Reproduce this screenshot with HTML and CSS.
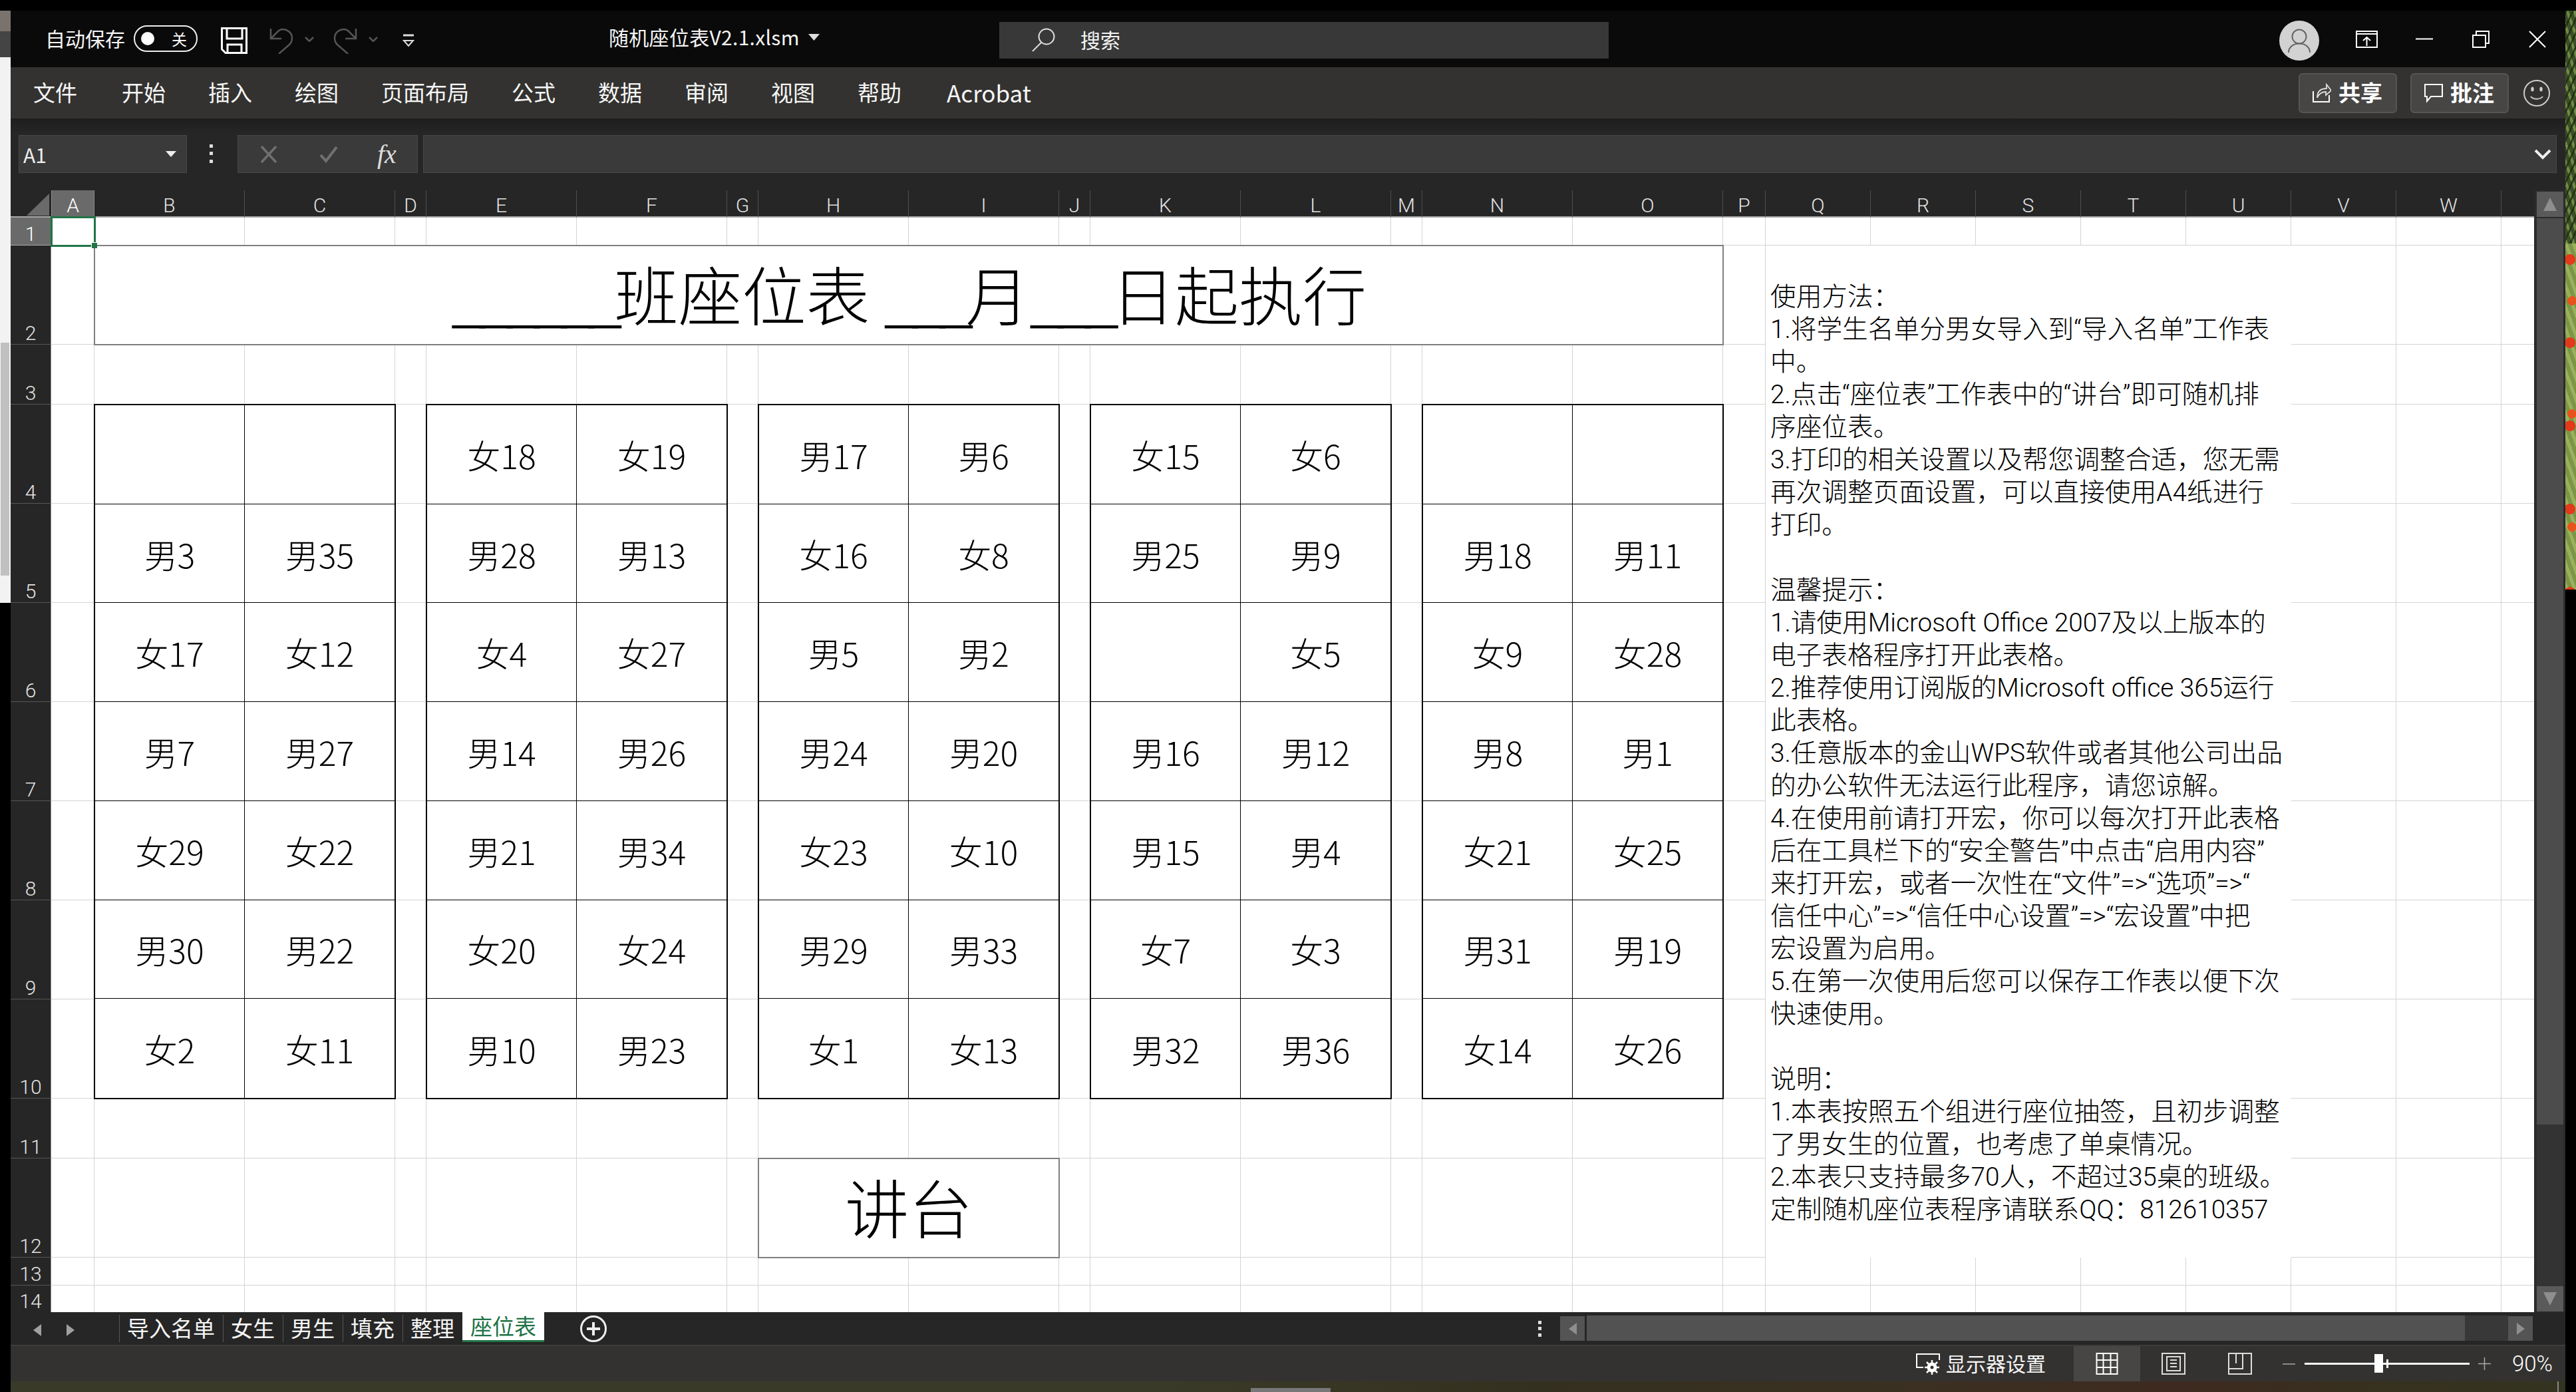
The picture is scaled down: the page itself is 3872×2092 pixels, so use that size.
FILE: index.html
```
<!DOCTYPE html>
<html lang="zh-CN">

<head>
    <meta http-equiv="Content-Type" content="text/html; charset=utf-8">
    <title>随机座位表V2.1.xlsm - Excel</title>
    <link rel="stylesheet" href="styles.css">
</head>

<body>
    <div class="topgap"></div>
    <div class="desktop">
        <div class="strip-left">
            <div class="sl-a"></div>
            <div class="sl-b"></div>
            <div class="sl-c"><div class="sl-thumb"></div></div>
        </div>

        <div class="window">
            <div class="titlebar">
                <span class="autosave">自动保存</span>
                <div class="toggle"><span class="knob"></span><span class="toggle-off">关</span></div>
                <svg class="ico-save" viewBox="0 0 40 40"><path d="M1.5 1.5H38.500V38.500H7L1.500 33ZM9 1.500V17H32V1.500M10 38.500V26H31V38.500" fill="none" stroke="#fff" stroke-width="3"/></svg>
                <svg class="ico-undo" viewBox="0 0 36 40"><path d="M2 2V17H18M2 17L14 5C22 0 34 6 34 16C34 22 32 24 30 26L14 40" fill="none" stroke="#555" stroke-width="2.500"/></svg>
                <svg class="ico-chev" viewBox="0 0 14 8"><path d="M1 1L7 7L13 1" fill="none" stroke="#555" stroke-width="2.500"/></svg>
                <svg class="ico-redo" viewBox="0 0 36 40"><path d="M34 2V17H18M34 17L22 5C14 0 2 6 2 16C2 22 4 24 6 26L22 40" fill="none" stroke="#555" stroke-width="2.500"/></svg>
                <svg class="ico-chev" viewBox="0 0 14 8"><path d="M1 1L7 7L13 1" fill="none" stroke="#555" stroke-width="2.500"/></svg>
                <svg class="ico-more" viewBox="0 0 18 20"><path d="M1 2H17" stroke="#ddd" stroke-width="3"/><path d="M2 10H16L9 18Z" fill="none" stroke="#ddd" stroke-width="2"/></svg>
                <span class="filename">随机座位表V2.1.xlsm</span>
                <svg class="ico-caret" viewBox="0 0 17 10"><path d="M0 0H17L8.500 10Z" fill="#ddd"/></svg>
                <div class="search">
                    <svg class="ico-search" viewBox="0 0 36 36"><circle cx="23" cy="13" r="11.500" fill="none" stroke="#ddd" stroke-width="2"/><path d="M15 22L2 35" stroke="#ddd" stroke-width="2"/></svg>
                    <span>搜索</span>
                </div>
                <svg class="avatar" viewBox="0 0 60 60"><circle cx="30" cy="30" r="30" fill="#d2d2d2"/><circle cx="30" cy="24" r="10.500" fill="none" stroke="#666" stroke-width="2"/><path d="M14 48C14 30 46 30 46 48" fill="none" stroke="#666" stroke-width="2"/></svg>
                <svg class="ico-display" viewBox="0 0 33 26"><path d="M1 1H32V25H1ZM1 5H32" fill="none" stroke="#fff" stroke-width="2"/><path d="M16.500 23V10M11 15L16.500 10L22 15" fill="none" stroke="#fff" stroke-width="2"/></svg>
                <svg class="ico-min" viewBox="0 0 26 3"><path d="M0 1.500H26" stroke="#fff" stroke-width="2"/></svg>
                <svg class="ico-restore" viewBox="0 0 26 26"><path d="M1 7H20V25H1ZM6 7V1H25V19H20" fill="none" stroke="#fff" stroke-width="2"/></svg>
                <svg class="ico-close" viewBox="0 0 26 26"><path d="M1 1L25 25M25 1L1 25" stroke="#fff" stroke-width="2"/></svg>
            </div>

            <div class="ribbon">
                <nav class="menu">
                    <span class="m-file">文件</span><span>开始</span><span>插入</span><span>绘图</span><span>页面布局</span><span>公式</span><span>数据</span><span>审阅</span><span>视图</span><span>帮助</span><span class="m-acrobat">Acrobat</span>
                </nav>
                <button class="rbtn">
                    <svg class="ico-share" viewBox="0 0 28 30"><path d="M1 12V28H25V18" fill="none" stroke="#fff" stroke-width="2"/><path d="M7 22C7 12 13 8 21 8V2L28 11L20 18V13C14 13 10 15 7 22Z" fill="none" stroke="#ddd" stroke-width="1.800"/></svg>
                    <b>共享</b>
                </button>
                <button class="rbtn">
                    <svg class="ico-share" viewBox="0 0 28 28"><path d="M1 1H27V19H10L4 26V19H1Z" fill="none" stroke="#fff" stroke-width="2"/></svg>
                    <b>批注</b>
                </button>
                <svg class="ico-smile" viewBox="0 0 40 40"><circle cx="20" cy="20" r="19" fill="none" stroke="#ccc" stroke-width="2"/><ellipse cx="13.500" cy="14" rx="2.200" ry="3.500" fill="#ccc"/><ellipse cx="26.500" cy="14" rx="2.200" ry="3.500" fill="#ccc"/><path d="M11 25C15 30 25 30 29 25" fill="none" stroke="#ccc" stroke-width="2"/></svg>
            </div>

            <div class="formula">
                <div class="namebox">
                    <span>A1</span>
                    <svg class="ico-namecaret" viewBox="0 0 16 9"><path d="M0 0H16L8 9Z" fill="#eee"/></svg>
                </div>
                <svg class="ico-kebab" viewBox="0 0 5 28"><path d="M0 0H5V5H0ZM0 11H5V16H0ZM0 23H5V28H0Z" fill="#ddd"/></svg>
                <div class="fxbox">
                    <svg class="ico-x" viewBox="0 0 30 26"><path d="M4 1L26 25M26 1L4 25" stroke="#707070" stroke-width="3.500"/></svg>
                    <svg class="ico-check" viewBox="0 0 30 26"><path d="M3 14L11 23L27 2" fill="none" stroke="#707070" stroke-width="4"/></svg>
                    <i class="fx">fx</i>
                </div>
                <div class="fbar">
                    <svg class="ico-fchev" viewBox="0 0 26 16"><path d="M2 2L13 13L24 2" fill="none" stroke="#eee" stroke-width="4"/></svg>
                </div>
            </div>

            <div class="workarea">
                <div class="book">
                    <div class="colhead">
                        <div class="corner"><span class="corner-tri"></span></div>
                        <div class="ch active">A</div><div class="ch">B</div><div class="ch">C</div><div class="ch">D</div><div class="ch">E</div><div class="ch">F</div><div class="ch">G</div><div class="ch">H</div><div class="ch">I</div><div class="ch">J</div><div class="ch">K</div><div class="ch">L</div><div class="ch">M</div><div class="ch">N</div><div class="ch">O</div><div class="ch">P</div><div class="ch">Q</div><div class="ch">R</div><div class="ch">S</div><div class="ch">T</div><div class="ch">U</div><div class="ch">V</div><div class="ch">W</div><div class="ch"></div>
                    </div>
                    <div class="sheetrow">
                        <div class="rowhead">
                            <div class="rh active">1</div><div class="rh">2</div><div class="rh">3</div><div class="rh">4</div><div class="rh">5</div><div class="rh">6</div><div class="rh">7</div><div class="rh">8</div><div class="rh">9</div><div class="rh">10</div><div class="rh">11</div><div class="rh">12</div><div class="rh">13</div><div class="rh">14</div>
                        </div>
                        <div class="sheet">
                            <div class="vlines">
                                <i></i><i></i><i></i><i></i><i></i><i></i><i></i><i></i><i></i><i></i><i></i><i></i><i></i><i></i><i></i><i></i><i></i><i></i><i></i><i></i><i></i><i></i><i></i><i></i>
                            </div>
                            <div class="hlines">
                                <i></i><i></i><i></i><i></i><i></i><i></i><i></i><i></i><i></i><i></i><i></i><i></i><i></i><i></i>
                            </div>

                            <div class="selcell"><span class="handle"></span></div>
                            <div class="titlecell"><span><span class="us">______</span>班座位表 <span class="us">___</span>月<span class="us">___</span>日起执行</span></div>

                            <div class="group g1">
                                <div></div><div></div>
                                <div>男3</div><div>男35</div>
                                <div>女17</div><div>女12</div>
                                <div>男7</div><div>男27</div>
                                <div>女29</div><div>女22</div>
                                <div>男30</div><div>男22</div>
                                <div>女2</div><div>女11</div>
                            </div>
                            <div class="group g2">
                                <div>女18</div><div>女19</div>
                                <div>男28</div><div>男13</div>
                                <div>女4</div><div>女27</div>
                                <div>男14</div><div>男26</div>
                                <div>男21</div><div>男34</div>
                                <div>女20</div><div>女24</div>
                                <div>男10</div><div>男23</div>
                            </div>
                            <div class="group g3">
                                <div>男17</div><div>男6</div>
                                <div>女16</div><div>女8</div>
                                <div>男5</div><div>男2</div>
                                <div>男24</div><div>男20</div>
                                <div>女23</div><div>女10</div>
                                <div>男29</div><div>男33</div>
                                <div>女1</div><div>女13</div>
                            </div>
                            <div class="group g4">
                                <div>女15</div><div>女6</div>
                                <div>男25</div><div>男9</div>
                                <div></div><div>女5</div>
                                <div>男16</div><div>男12</div>
                                <div>男15</div><div>男4</div>
                                <div>女7</div><div>女3</div>
                                <div>男32</div><div>男36</div>
                            </div>
                            <div class="group g5">
                                <div></div><div></div>
                                <div>男18</div><div>男11</div>
                                <div>女9</div><div>女28</div>
                                <div>男8</div><div>男1</div>
                                <div>女21</div><div>女25</div>
                                <div>男31</div><div>男19</div>
                                <div>女14</div><div>女26</div>
                            </div>

                            <div class="podium">讲台</div>

                            <div class="notes">
                                <p>使用方法：</p>
                                <p>1.将学生名单分男女导入到“导入名单”工作表</p>
                                <p>中。</p>
                                <p>2.点击“座位表”工作表中的“讲台”即可随机排</p>
                                <p>序座位表。</p>
                                <p>3.打印的相关设置以及帮您调整合适，您无需</p>
                                <p>再次调整页面设置，可以直接使用A4纸进行</p>
                                <p>打印。</p>
                                <p>&nbsp;</p>
                                <p>温馨提示：</p>
                                <p>1.请使用Microsoft Office 2007及以上版本的</p>
                                <p>电子表格程序打开此表格。</p>
                                <p>2.推荐使用订阅版的Microsoft office 365运行</p>
                                <p>此表格。</p>
                                <p>3.任意版本的金山WPS软件或者其他公司出品</p>
                                <p>的办公软件无法运行此程序，请您谅解。</p>
                                <p>4.在使用前请打开宏，你可以每次打开此表格</p>
                                <p>后在工具栏下的“安全警告”中点击“启用内容”</p>
                                <p>来打开宏，或者一次性在“文件”=&gt;“选项”=&gt;“</p>
                                <p>信任中心”=&gt;“信任中心设置”=&gt;“宏设置”中把</p>
                                <p>宏设置为启用。</p>
                                <p>5.在第一次使用后您可以保存工作表以便下次</p>
                                <p>快速使用。</p>
                                <p>&nbsp;</p>
                                <p>说明：</p>
                                <p>1.本表按照五个组进行座位抽签，且初步调整</p>
                                <p>了男女生的位置，也考虑了单桌情况。</p>
                                <p>2.本表只支持最多70人，不超过35桌的班级。</p>
                                <p>定制随机座位表程序请联系QQ：812610357</p>
                            </div>
                        </div>
                    </div>
                </div>
                <div class="vscroll">
                    <div class="vbtn"><svg class="ico-vup" viewBox="0 0 20 20"><path d="M10 0L20 20H0Z" fill="#8e8e8e"/></svg></div>
                    <div class="vthumb"></div>
                    <div class="vtrack"></div>
                    <div class="vbtn"><svg class="ico-vup" viewBox="0 0 20 20"><path d="M10 20L20 0H0Z" fill="#8e8e8e"/></svg></div>
                </div>
            </div>

            <div class="tabbar">
                <div class="tabnav">
                    <svg class="ico-tabnav" viewBox="0 0 12 18"><path d="M12 0V18L0 9Z" fill="#a0a0a0"/></svg>
                    <svg class="ico-tabnav" viewBox="0 0 12 18"><path d="M0 0V18L12 9Z" fill="#a0a0a0"/></svg>
                </div>
                <div class="tab">导入名单</div>
                <div class="tab">女生</div>
                <div class="tab">男生</div>
                <div class="tab">填充</div>
                <div class="tab">整理</div>
                <div class="tab current">座位表</div>
                <svg class="ico-plus" viewBox="0 0 40 40"><circle cx="20" cy="20" r="18.500" fill="none" stroke="#eee" stroke-width="3"/><path d="M20 10V30M10 20H30" stroke="#eee" stroke-width="4"/></svg>
                <svg class="ico-tabkebab" viewBox="0 0 5 24"><path d="M0 0H5V5H0ZM0 9H5V14H0ZM0 19H5V24H0Z" fill="#ddd"/></svg>
                <div class="hbtn hbtn-left"><svg class="ico-hb" viewBox="0 0 12 18"><path d="M12 0V18L0 9Z" fill="#8e8e8e"/></svg></div>
                <div class="hthumb"></div>
                <div class="hbtn"><svg class="ico-hb" viewBox="0 0 12 18"><path d="M0 0V18L12 9Z" fill="#8e8e8e"/></svg></div>
            </div>

            <div class="statusbar">
                <svg class="ico-disp" viewBox="0 0 37 32"><path d="M11 21H1V1H35V10" fill="none" stroke="#fff" stroke-width="2"/><circle cx="24" cy="21" r="5" fill="none" stroke="#fff" stroke-width="5"/><path d="M24 10V14M24 28V32M13 21H17M31 21H35M16 13L19 16M29 26L32 29M32 13L29 16M19 26L16 29" stroke="#fff" stroke-width="2.500"/></svg>
                <span class="disp-text">显示器设置</span>
                <div class="viewbtn on">
                    <svg class="ico-view" viewBox="0 0 33 33"><path d="M1 1H32V32H1ZM11 1V32M22 1V32M1 11H32M1 22H32" fill="none" stroke="#fff" stroke-width="2"/></svg>
                </div>
                <div class="viewbtn">
                    <svg class="ico-view" viewBox="0 0 36 33"><path d="M1 1H35V32H1ZM8 6H28V27H8ZM13 11H23M13 16H23M13 21H23" fill="none" stroke="#ddd" stroke-width="2"/></svg>
                </div>
                <div class="viewbtn">
                    <svg class="ico-view" viewBox="0 0 36 33"><path d="M1 1H35V32H1ZM1 24H22V1M12 1V16" fill="none" stroke="#ddd" stroke-width="2"/></svg>
                </div>
                <span class="zoom-minus"></span>
                <div class="slider"><span class="slider-thumb"></span><span class="slider-tick"></span></div>
                <svg class="zoom-plus" viewBox="0 0 19 19"><path d="M9.500 0V19M0 9.500H19" stroke="#aaa" stroke-width="1.500"/></svg>
                <span class="zoom-val">90%</span>
            </div>

            <div class="wallbottom"><span class="wb-task"></span><span class="wb-bar"></span></div>
        </div>

        <div class="strip-right">
            <div class="sr-a"></div>
            <div class="sr-b"></div>
        </div>
    </div>
</body>
</html>
```
FILE: styles.css
```
* {
    box-sizing: border-box;
}

html,
body {
    margin: 0;
    width: 3872px;
    height: 2092px;
    overflow: hidden;
    background: #000;
    font-family: "Noto Sans CJK SC", sans-serif;
    color: #eee;
}

svg {
    display: block;
    flex: none;
}

.topgap {
    height: 16px;
}

.desktop {
    display: flex;
    height: 2076px;
}

/* whatever sits behind the window */
.strip-left {
    width: 16px;
    background: #000;
}

.sl-a {
    height: 31px;
    background: #7a736d;
}

.sl-b {
    height: 39px;
    background: #444;
}

.sl-c {
    height: 820px;
    background: #f2f2f2;
    padding: 429px 2px 0 1px;
}

.sl-thumb {
    height: 350px;
    background: #c0c0c0;
}

.strip-right {
    width: 16px;
}

.sr-a {
    height: 350px;
    background:
        repeating-linear-gradient(115deg, rgba(20, 40, 10, .7) 0 3px, transparent 3px 9px),
        repeating-linear-gradient(70deg, #6e8a45 0 4px, #3d4f28 4px 10px);
}

.sr-b {
    height: 520px;
    background:
        radial-gradient(circle 8px at 7px 24px, #e23a1a 98%, transparent),
        radial-gradient(circle 7px at 10px 86px, #e8531c 98%, transparent),
        repeating-linear-gradient(70deg, #9ab05c 0 5px, #7c9648 5px 11px);
    background-size: 16px 125px, 16px 170px, auto;
}

.window {
    width: 3840px;
    display: flex;
    flex-direction: column;
}

/* title bar */
.titlebar {
    height: 85px;
    background: #0a0a0a;
    display: flex;
    align-items: center;
    padding: 0 0 4px 52px;
    font-size: 30px;
    color: #f4f4f4;
}

.autosave {
    width: 120px;
}

.toggle {
    width: 96px;
    height: 40px;
    margin-left: 13px;
    border: 2px solid #eee;
    border-radius: 20px;
    display: flex;
    align-items: center;
    padding-left: 9px;
    margin-top: 3px;
}

.knob {
    width: 20px;
    height: 20px;
    background: #fff;
    border-radius: 50%;
}

.toggle-off {
    font-size: 23px;
    margin-left: 26px;
    color: #fff;
}

.ico-save {
    width: 40px;
    height: 40px;
    margin-left: 35px;
    margin-top: 8px;
}

.ico-undo,
.ico-redo {
    width: 36px;
    height: 40px;
    margin-top: 8px;
}

.ico-undo {
    margin-left: 33px;
}

.ico-redo {
    margin-left: 29px;
}

.ico-chev {
    width: 14px;
    height: 8px;
    margin-left: 17px;
    margin-top: 4px;
}

.ico-more {
    width: 18px;
    height: 20px;
    margin-left: 37px;
    margin-top: 8px;
}

.filename {
    margin-left: 292px;
    width: 285px;
    margin-top: -4px;
    letter-spacing: .3px;
    white-space: nowrap;
}

.ico-caret {
    width: 17px;
    height: 10px;
    margin-left: 15px;
    margin-top: -2px;
}

.search {
    width: 916px;
    height: 55px;
    margin-left: 270px;
    background: #383838;
    display: flex;
    align-items: center;
    padding-left: 48px;
    margin-top: 7px;
}

.search span {
    margin-left: 38px;
    margin-top: -2px;
}

.ico-search {
    width: 36px;
    height: 36px;
}

.avatar {
    width: 60px;
    height: 60px;
    margin-left: 1008px;
    margin-top: 8px;
}

.ico-display {
    width: 33px;
    height: 26px;
    margin-left: 55px;
    margin-top: 4px;
}

.ico-min {
    width: 26px;
    height: 3px;
    margin-left: 57px;
    margin-top: 4px;
}

.ico-restore {
    width: 26px;
    height: 26px;
    margin-left: 59px;
    margin-top: 4px;
}

.ico-close {
    width: 26px;
    height: 26px;
    margin-left: 59px;
    margin-top: 4px;
}

/* ribbon tabs */
.ribbon {
    height: 77px;
    background: #333230;
    display: flex;
    align-items: center;
    padding-left: 34px;
}

.menu {
    display: flex;
    align-items: center;
    gap: 64px;
    font-size: 33px;
    color: #f6f6f6;
    flex: 1;
    margin-top: -3px;
}

.m-file {
    margin-right: 3px;
}

.m-acrobat {
    margin-left: 4px;
    font-size: 35px;
}

.rbtn {
    width: 148px;
    height: 60px;
    margin-right: 20px;
    background: #474645;
    border: 2px solid #555;
    border-radius: 6px;
    padding: 0 0 0 19px;
    display: flex;
    align-items: center;
    color: #fff;
    font-family: inherit;
    font-size: 33px;
}

.rbtn b {
    margin: -3px 0 0 11px;
    font-weight: 700;
}

.ico-share {
    width: 28px;
    height: 30px;
}

.ico-smile {
    width: 40px;
    height: 40px;
    margin-right: 23px;
    margin-left: 2px;
}

/* formula bar */
.formula {
    height: 108px;
    background: linear-gradient(#1e1e1e, #262626 22px);
    display: flex;
    align-items: flex-start;
    padding: 25px 13px 0 12px;
}

.namebox,
.fxbox,
.fbar {
    height: 57px;
    background: #3a3a3a;
    border: 1px solid #474747;
    display: flex;
    align-items: center;
}

.namebox {
    width: 253px;
    padding: 0 15px 0 6px;
    justify-content: space-between;
    font-size: 30px;
}

.ico-namecaret {
    width: 16px;
    height: 9px;
}

.ico-kebab {
    width: 5px;
    height: 28px;
    margin: 14px 37px 0 34px;
}

.fxbox {
    width: 271px;
    padding-left: 31px;
}

.ico-x,
.ico-check {
    width: 30px;
    height: 26px;
}

.ico-check {
    margin-left: 60px;
}

.fx {
    margin-left: 58px;
    font-family: "Liberation Serif", serif;
    font-size: 40px;
    color: #ddd;
}

.fbar {
    flex: 1;
    margin-left: 8px;
    justify-content: flex-end;
    padding-right: 7px;
}

.ico-fchev {
    width: 26px;
    height: 16px;
}

/* sheet */
.workarea {
    display: flex;
    height: 1686px;
}

.book {
    width: 3793px;
}

.colhead {
    display: grid;
    grid-template-columns: 61px 65px repeat(2, 226px) 47px repeat(2, 226px) 47px repeat(2, 226px) 47px repeat(2, 226px) 47px repeat(2, 226px) 64px repeat(7, 158px) 49px;
    height: 41px;
    background: #262626;
    border-bottom: 2px solid #a8a8a8;
    font-family: Roboto, sans-serif;
    font-weight: 300;
    font-size: 30px;
    color: #e2e2e2;
}

.corner {
    display: flex;
    justify-content: flex-end;
    padding: 5px 3px 0 0;
}

.corner-tri {
    width: 34px;
    height: 33px;
    background: #6a6a6a;
    clip-path: polygon(100% 0, 100% 100%, 0 100%);
}

.ch {
    display: flex;
    align-items: center;
    justify-content: center;
    padding-top: 5px;
    border-right: 1px solid #4e4e4e;
}

.ch.active {
    background: #6a6a6a;
    border-left: 1px solid #8a8a8a;
    border-right: 1px solid #8a8a8a;
    color: #fff;
}

.ch:last-child {
    border-right: 0;
}

.sheetrow {
    display: flex;
    height: 1645px;
}

.rowhead {
    width: 61px;
    background: #262626;
    display: grid;
    grid-template-rows: 42px 149px 90px repeat(7, 149px) 90px 149px 42px 40px;
    border-right: 1px solid #888;
    font-family: Roboto, sans-serif;
    font-weight: 300;
    font-size: 30px;
    line-height: 1;
    color: #e2e2e2;
}

.rh {
    display: flex;
    align-items: flex-end;
    justify-content: center;
    padding: 0 0 1px;
    border-bottom: 1px solid #555;
}

.rh.active {
    background: #6a6a6a;
    border-bottom-color: #aaa;
    color: #fff;
}

.rh:last-child {
    border-bottom: 0;
}

.sheet {
    width: 3732px;
    background: #fff;
    display: grid;
    grid-template-columns: 65px repeat(2, 226px) 47px repeat(2, 226px) 47px repeat(2, 226px) 47px repeat(2, 226px) 47px repeat(2, 226px) 64px repeat(7, 158px) 49px;
    grid-template-rows: 42px 149px 90px repeat(7, 149px) 90px 149px 42px 40px;
    color: #000;
}

.vlines,
.hlines {
    grid-area: 1 / 1 / -1 / -1;
    display: grid;
}

.vlines {
    grid-template-columns: 65px repeat(2, 226px) 47px repeat(2, 226px) 47px repeat(2, 226px) 47px repeat(2, 226px) 47px repeat(2, 226px) 64px repeat(7, 158px) 49px;
}

.hlines {
    grid-template-rows: 42px 149px 90px repeat(7, 149px) 90px 149px 42px 40px;
}

.vlines i {
    border-right: 1px solid #d4d4d4;
}

.hlines i {
    border-bottom: 1px solid #d4d4d4;
}

.vlines i:last-child,
.hlines i:last-child {
    border: 0;
}

.selcell {
    grid-area: 1 / 1 / 2 / 2;
    margin: -2px -2px -2px -1px;
    border: 3px solid #217346;
    position: relative;
    z-index: 1;
}

.handle {
    position: absolute;
    right: -5px;
    bottom: -5px;
    width: 9px;
    height: 9px;
    background: #217346;
    border: 1px solid #fff;
    border-width: 1px 0 0 1px;
}

.titlecell {
    grid-area: 2 / 2 / 3 / 16;
    margin: -1px;
    padding-bottom: 8px;
    background: #fff;
    border: 2px solid #7f7f7f;
    display: flex;
    align-items: center;
    justify-content: center;
    font-size: 96px;
    font-weight: 300;
    white-space: pre;
}

.us {
    letter-spacing: -12.300px;
}

.group {
    margin: -1px;
    display: grid;
    grid-template-columns: 1fr 1fr;
    grid-template-rows: repeat(7, 1fr);
    border: 2px solid #000;
    background: #fff;
    font-size: 50px;
    font-weight: 300;
}

.group div {
    display: flex;
    align-items: center;
    justify-content: center;
    border-bottom: 1px solid #000;
}

.group div:nth-child(odd) {
    border-right: 1px solid #000;
}

.group div:nth-last-child(-n+2) {
    border-bottom: 0;
}

.g1 {
    grid-area: 4 / 2 / 11 / 4;
}

.g2 {
    grid-area: 4 / 5 / 11 / 7;
}

.g3 {
    grid-area: 4 / 8 / 11 / 10;
}

.g4 {
    grid-area: 4 / 11 / 11 / 13;
}

.g5 {
    grid-area: 4 / 14 / 11 / 16;
}

.podium {
    grid-area: 12 / 8 / 13 / 10;
    margin: -1px;
    padding-bottom: 9px;
    background: #fff;
    border: 2px solid #7f7f7f;
    display: flex;
    align-items: center;
    justify-content: center;
    font-size: 96px;
    font-weight: 300;
}

.notes {
    grid-area: 2 / 17 / 13 / 22;
    background: #fff;
    display: flex;
    flex-direction: column;
    justify-content: center;
    padding: 3px 0 0 7px;
    font-family: Roboto, "Noto Sans CJK SC", sans-serif;
    font-size: 38.700px;
    font-weight: 300;
    line-height: 49px;
    white-space: nowrap;
}

.notes p {
    margin: 0;
}

/* scrollbar on the right */
.vscroll {
    width: 47px;
    background: #2b2b2b;
    padding: 2px 3px 1px 4px;
    display: flex;
    flex-direction: column;
}

.vbtn {
    height: 38px;
    background: #5a5a5a;
    display: flex;
    align-items: center;
    justify-content: center;
}

.ico-vup {
    width: 20px;
    height: 20px;
}

.vthumb {
    height: 1362px;
    margin-top: 2px;
    background: #4c4c4c;
}

.vtrack {
    flex: 1;
    background: #333;
}

/* sheet tabs */
.tabbar {
    height: 49px;
    background: #262626;
    display: flex;
    align-items: flex-start;
    font-size: 33px;
    color: #f6f6f6;
    padding-right: 49px;
}

.tabnav {
    width: 163px;
    height: 45px;
    display: flex;
    gap: 38px;
    padding: 18px 0 0 34px;
}

.ico-tabnav {
    width: 12px;
    height: 18px;
}

.tab {
    height: 41px;
    margin-top: 4px;
    padding: 0 12px 0 11px;
    border-left: 1px solid #555;
    line-height: 38px;
    white-space: nowrap;
}

.tab.current {
    height: 45px;
    margin-top: 0;
    padding: 0 12px;
    width: 123px;
    border: 0;
    border-bottom: 3px solid #217346;
    background: #fff;
    color: #217346;
    line-height: 40px;
}

.ico-plus {
    width: 40px;
    height: 40px;
    margin: 5px 0 0 54px;
}

.ico-tabkebab {
    width: 5px;
    height: 24px;
    margin: 13px 0 0 1400px;
}

.hbtn {
    width: 37px;
    height: 37px;
    margin-top: 6px;
    background: #545454;
    display: flex;
    align-items: center;
    justify-content: center;
}

.hbtn-left {
    margin-left: 28px;
}

.hthumb {
    width: 1320px;
    height: 38px;
    margin: 5px 65px 0 3px;
    background: #525252;
    box-shadow: 65px 0 0 #383838;
}

.ico-hb {
    width: 12px;
    height: 18px;
}

/* status bar */
.statusbar {
    height: 55px;
    background: #333230;
    border-top: 2px solid #3c3c3c;
    display: flex;
    align-items: center;
    padding-left: 2864px;
    font-size: 30px;
    color: #f6f6f6;
}

.ico-disp {
    width: 37px;
    height: 32px;
}

.disp-text {
    width: 150px;
    margin: -3px 0 0 8px;
    white-space: nowrap;
}

.viewbtn {
    width: 100px;
    height: 53px;
    display: flex;
    align-items: center;
    justify-content: center;
}

.disp-text + .viewbtn {
    margin-left: 42px;
}

.viewbtn.on {
    background: #474645;
}

.ico-view {
    width: 36px;
    height: 33px;
}

.zoom-minus {
    width: 19px;
    height: 2px;
    margin-left: 14px;
    background: #8a8a8a;
}

.slider {
    width: 248px;
    height: 3px;
    margin-left: 14px;
    background: #fff;
    position: relative;
}

.slider-thumb {
    position: absolute;
    left: 105px;
    top: -13px;
    width: 13px;
    height: 28px;
    background: #fff;
}

.slider-tick {
    position: absolute;
    left: 123px;
    top: -5px;
    width: 3px;
    height: 13px;
    background: #fff;
}

.zoom-plus {
    width: 19px;
    height: 19px;
    margin-left: 13px;
}

.zoom-val {
    margin-left: 32px;
    font-family: Roboto, sans-serif;
    font-weight: 300;
    font-size: 33px;
    color: #fff;
}

.wallbottom {
    flex: 1;
    background: linear-gradient(90deg, #3a3a28, #3a3a28 45%, #34301f 60%, #3b3022 75%, #3e2a20 85%, #37301f 92%, #333420);
    position: relative;
}

.wb-task {
    position: absolute;
    left: 1864px;
    top: 10px;
    width: 120px;
    height: 6px;
    background: #777;
}

.wb-bar {
    position: absolute;
    left: 3828px;
    top: 0;
    width: 2px;
    height: 16px;
    background: #888;
}
```
